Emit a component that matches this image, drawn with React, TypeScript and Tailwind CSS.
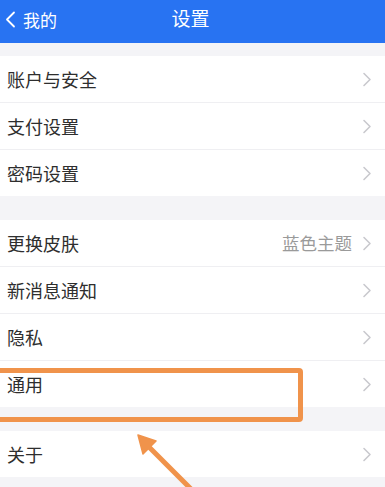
import React from "react";

const Chevron = () => (
  <svg width="10" height="15" viewBox="0 0 10 15" className="shrink-0">
    <polyline points="2,1.5 8,7.5 2,13.5" fill="none" stroke="#c9c9ce" strokeWidth="1.6" strokeLinecap="round" strokeLinejoin="round" />
  </svg>
);

const Row = ({ label, value }: { label: string; value?: string }) => (
  <div className="flex h-[46px] items-center justify-between bg-white pl-[7px] pr-[13px]">
    <span className="text-[18px] leading-none text-[#2e2e2e]">{label}</span>
    <div className="flex items-center gap-[10px]">
      {value && <span className="text-[17.5px] leading-none text-[#9a9a9a]">{value}</span>}
      <Chevron />
    </div>
  </div>
);

const Sep = () => <div className="h-px bg-[#efeff2]" />;

export default function App() {
  return (
    <div
      className="relative h-[487px] w-[385px] overflow-hidden bg-[#f4f4f7]"
      style={{ fontFamily: '"Noto Sans CJK SC", "Noto Sans", sans-serif' }}
    >
      <div className="relative flex h-[43px] items-center bg-[#2873f2] pb-[5px] text-white">
        <div className="flex items-center gap-[7px] pl-[5px]">
          <svg width="11" height="17" viewBox="0 0 11 17">
            <polyline points="9,1.5 2,8.5 9,15.5" fill="none" stroke="white" strokeWidth="1.8" strokeLinecap="round" strokeLinejoin="round" />
          </svg>
          <span className="text-[17px] leading-none">我的</span>
        </div>
        <div className="absolute inset-0 flex items-center justify-center pb-[8px] pr-[4px]">
          <span className="text-[19px] leading-none">设置</span>
        </div>
      </div>
      <div className="h-[13px]" />
      <div>
        <Row label="账户与安全" />
        <Sep />
        <Row label="支付设置" />
        <Sep />
        <Row label="密码设置" />
      </div>
      <div className="h-[24px]" />
      <div>
        <Row label="更换皮肤" value="蓝色主题" />
        <Sep />
        <Row label="新消息通知" />
        <Sep />
        <Row label="隐私" />
        <Sep />
        <Row label="通用" />
      </div>
      <div className="h-[24px]" />
      <div>
        <Row label="关于" />
      </div>

      {/* annotation box */}
      <div className="absolute left-[-10px] top-[368px] h-[54px] w-[313px] rounded-[4px] border-[5px] border-[#f0934b]" />
      {/* annotation arrow */}
      <svg className="absolute left-0 top-0" width="385" height="487" viewBox="0 0 385 487">
        <line x1="194" y1="492" x2="148" y2="446" stroke="#f0934b" strokeWidth="5" />
        <polygon points="138,435 156,441 143,454" fill="#f0934b" stroke="#f0934b" strokeWidth="1.5" strokeLinejoin="round" />
      </svg>
    </div>
  );
}
